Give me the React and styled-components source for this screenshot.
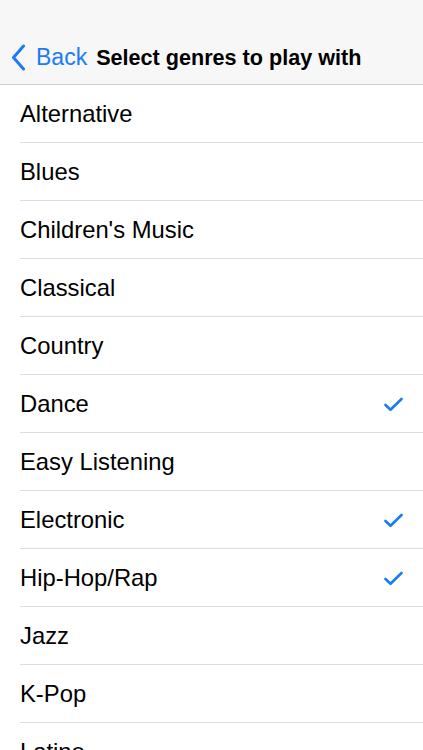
import React from 'react';
import styled, { createGlobalStyle } from 'styled-components';

const GlobalStyle = createGlobalStyle`
  html, body {
    margin: 0;
    padding: 0;
    background: #ffffff;
    overflow: hidden;
  }
  body {
    font-family: "Liberation Sans", Arial, sans-serif;
    -webkit-font-smoothing: antialiased;
  }
`;

const Screen = styled.div`
  width: 423px;
  height: 750px;
  overflow: hidden;
  background: #fff;
`;

const NavBar = styled.div`
  height: 85px;
  box-sizing: border-box;
  padding: 36px 0 5px 11px;
  background: #f7f7f7;
  border-bottom: 1px solid #cfcfd2;
  display: flex;
  align-items: center;
`;

const BackButton = styled.button`
  display: flex;
  align-items: center;
  gap: 10px;
  background: none;
  border: none;
  padding: 0;
  color: #1a7cf4;
  font-family: inherit;
  font-size: 23px;
  cursor: pointer;
`;

const Title = styled.h1`
  margin: 0 0 0 9px;
  font-size: 21.6px;
  font-weight: bold;
  color: #000;
`;

const List = styled.ul`
  list-style: none;
  margin: 0;
  padding: 0;
`;

const Row = styled.li`
  padding-left: 20px;
  display: flex;
`;

const RowInner = styled.div`
  flex: 1;
  height: 58px;
  box-sizing: border-box;
  padding: 1px 20px 0 0;
  display: flex;
  align-items: center;
  justify-content: space-between;
  border-bottom: 1px solid #dcdcdf;
  font-size: 23.8px;
  color: #000;
`;

const genres = [
  { name: 'Alternative' },
  { name: 'Blues' },
  { name: "Children's Music" },
  { name: 'Classical' },
  { name: 'Country' },
  { name: 'Dance', checked: true },
  { name: 'Easy Listening' },
  { name: 'Electronic', checked: true },
  { name: 'Hip-Hop/Rap', checked: true },
  { name: 'Jazz' },
  { name: 'K-Pop' },
  { name: 'Latino' },
  { name: 'Pop' },
];

function Chevron() {
  return (
    <svg width="15" height="27" viewBox="0 0 15 27">
      <path d="M12.5 2 L2.5 13.5 L12.5 25" fill="none" stroke="#1a7cf4" strokeWidth="3" strokeLinecap="round" strokeLinejoin="round" />
    </svg>
  );
}

function Check() {
  return (
    <svg width="19" height="15" viewBox="0 0 19 15">
      <path d="M1.5 8 L6.5 12.8 L17.5 2" fill="none" stroke="#1a7cf4" strokeWidth="2.6" strokeLinecap="round" strokeLinejoin="round" />
    </svg>
  );
}

export default function App() {
  return (
    <Screen>
      <GlobalStyle />
      <NavBar>
        <BackButton>
          <Chevron />
          Back
        </BackButton>
        <Title>Select genres to play with</Title>
      </NavBar>
      <List>
        {genres.map(g => (
          <Row key={g.name}>
            <RowInner>
              <span>{g.name}</span>
              {g.checked && <Check />}
            </RowInner>
          </Row>
        ))}
      </List>
    </Screen>
  );
}
